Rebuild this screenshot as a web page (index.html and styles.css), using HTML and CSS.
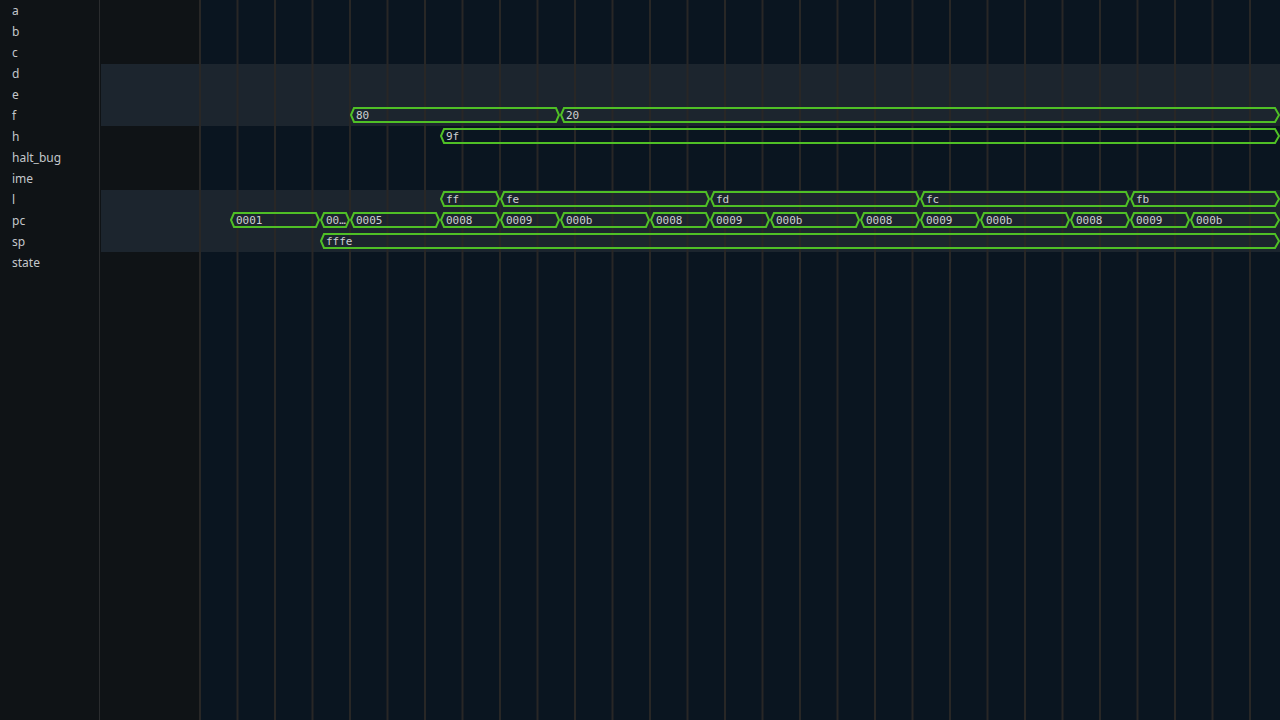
FILE: index.html
```
<!DOCTYPE html>
<html>
<head>
<meta charset="utf-8">
<link rel="stylesheet" href="styles.css">
</head>
<body>
<div class="app">
  <div class="sidebar">
    <div class="label">a</div>
    <div class="label">b</div>
    <div class="label">c</div>
    <div class="label">d</div>
    <div class="label">e</div>
    <div class="label">f</div>
    <div class="label">h</div>
    <div class="label">halt_bug</div>
    <div class="label">ime</div>
    <div class="label">l</div>
    <div class="label">pc</div>
    <div class="label">sp</div>
    <div class="label">state</div>
  </div>
  <div class="main">
    <svg class="wave" width="1180" height="720" viewBox="0 0 1180 720">
      <rect x="0" y="0" width="100" height="720" class="pre"/>
      <rect x="100" y="0" width="1080" height="720" class="bg"/>
      <rect x="1" y="64" width="1179" height="62" class="band"/>
      <rect x="1" y="190" width="1179" height="62" class="band"/>
      <g class="grid">
        <line x1="100" y1="0" x2="100" y2="720"/>
        <line x1="137.5" y1="0" x2="137.5" y2="720"/>
        <line x1="175" y1="0" x2="175" y2="720"/>
        <line x1="212.5" y1="0" x2="212.5" y2="720"/>
        <line x1="250" y1="0" x2="250" y2="720"/>
        <line x1="287.5" y1="0" x2="287.5" y2="720"/>
        <line x1="325" y1="0" x2="325" y2="720"/>
        <line x1="362.5" y1="0" x2="362.5" y2="720"/>
        <line x1="400" y1="0" x2="400" y2="720"/>
        <line x1="437.5" y1="0" x2="437.5" y2="720"/>
        <line x1="475" y1="0" x2="475" y2="720"/>
        <line x1="512.5" y1="0" x2="512.5" y2="720"/>
        <line x1="550" y1="0" x2="550" y2="720"/>
        <line x1="587.5" y1="0" x2="587.5" y2="720"/>
        <line x1="625" y1="0" x2="625" y2="720"/>
        <line x1="662.5" y1="0" x2="662.5" y2="720"/>
        <line x1="700" y1="0" x2="700" y2="720"/>
        <line x1="737.5" y1="0" x2="737.5" y2="720"/>
        <line x1="775" y1="0" x2="775" y2="720"/>
        <line x1="812.5" y1="0" x2="812.5" y2="720"/>
        <line x1="850" y1="0" x2="850" y2="720"/>
        <line x1="887.5" y1="0" x2="887.5" y2="720"/>
        <line x1="925" y1="0" x2="925" y2="720"/>
        <line x1="962.5" y1="0" x2="962.5" y2="720"/>
        <line x1="1000" y1="0" x2="1000" y2="720"/>
        <line x1="1037.5" y1="0" x2="1037.5" y2="720"/>
        <line x1="1075" y1="0" x2="1075" y2="720"/>
        <line x1="1112.5" y1="0" x2="1112.5" y2="720"/>
        <line x1="1150" y1="0" x2="1150" y2="720"/>
      </g>
      <g class="seg">
        <polygon points="251,115 254,108 456,108 459,115 456,122 254,122"/>
        <polygon points="461,115 464,108 1175,108 1179,115 1175,122 464,122"/>
        <polygon points="341,136 344,129 1175,129 1179,136 1175,143 344,143"/>
        <polygon points="341,199 344,192 396,192 399,199 396,206 344,206"/>
        <polygon points="401,199 404,192 606,192 609,199 606,206 404,206"/>
        <polygon points="611,199 614,192 816,192 819,199 816,206 614,206"/>
        <polygon points="821,199 824,192 1026,192 1029,199 1026,206 824,206"/>
        <polygon points="1031,199 1034,192 1175,192 1179,199 1175,206 1034,206"/>
        <polygon points="131,220 134,213 216,213 219,220 216,227 134,227"/>
        <polygon points="221,220 224,213 246,213 249,220 246,227 224,227"/>
        <polygon points="251,220 254,213 336,213 339,220 336,227 254,227"/>
        <polygon points="341,220 344,213 396,213 399,220 396,227 344,227"/>
        <polygon points="401,220 404,213 456,213 459,220 456,227 404,227"/>
        <polygon points="461,220 464,213 546,213 549,220 546,227 464,227"/>
        <polygon points="551,220 554,213 606,213 609,220 606,227 554,227"/>
        <polygon points="611,220 614,213 666,213 669,220 666,227 614,227"/>
        <polygon points="671,220 674,213 756,213 759,220 756,227 674,227"/>
        <polygon points="761,220 764,213 816,213 819,220 816,227 764,227"/>
        <polygon points="821,220 824,213 876,213 879,220 876,227 824,227"/>
        <polygon points="881,220 884,213 966,213 969,220 966,227 884,227"/>
        <polygon points="971,220 974,213 1026,213 1029,220 1026,227 974,227"/>
        <polygon points="1031,220 1034,213 1086,213 1089,220 1086,227 1034,227"/>
        <polygon points="1091,220 1094,213 1175,213 1179,220 1175,227 1094,227"/>
        <polygon points="221,241 224,234 1175,234 1179,241 1175,248 224,248"/>
      </g>
      <g class="val">
        <text x="256" y="119">80</text>
        <text x="466" y="119">20</text>
        <text x="346" y="140">9f</text>
        <text x="346" y="203">ff</text>
        <text x="406" y="203">fe</text>
        <text x="616" y="203">fd</text>
        <text x="826" y="203">fc</text>
        <text x="1036" y="203">fb</text>
        <text x="136" y="224">0001</text>
        <text x="226" y="224">00…</text>
        <text x="256" y="224">0005</text>
        <text x="346" y="224">0008</text>
        <text x="406" y="224">0009</text>
        <text x="466" y="224">000b</text>
        <text x="556" y="224">0008</text>
        <text x="616" y="224">0009</text>
        <text x="676" y="224">000b</text>
        <text x="766" y="224">0008</text>
        <text x="826" y="224">0009</text>
        <text x="886" y="224">000b</text>
        <text x="976" y="224">0008</text>
        <text x="1036" y="224">0009</text>
        <text x="1096" y="224">000b</text>
        <text x="226" y="245">fffe</text>
      </g>
    </svg>
  </div>
</div>
</body>
</html>
```
FILE: styles.css
```
html, body {
  margin: 0;
  padding: 0;
  background: #0a1520;
  overflow: hidden;
}
.app {
  display: flex;
  width: 1280px;
  height: 720px;
}
.sidebar {
  width: 99px;
  height: 720px;
  border-right: 1px solid #2a2c2e;
  background: #0f1316;
  display: flex;
  flex-direction: column;
}
.label {
  height: 21px;
  line-height: 21px;
  padding-left: 12px;
  font-family: "Noto Sans", "DejaVu Sans", sans-serif;
  font-size: 12px;
  color: #c3c7cb;
  white-space: nowrap;
}
.main {
  flex: 1;
  height: 720px;
}
.wave {
  display: block;
}
.pre {
  fill: #0f1316;
}
.bg {
  fill: #0a1520;
}
.band {
  fill: #1c252e;
}
.grid line {
  stroke: #282726;
  stroke-width: 2;
}
.seg polygon {
  fill: none;
  stroke: #4fbf26;
  stroke-width: 2;
  stroke-linejoin: miter;
}
.val text {
  font-family: "DejaVu Sans Mono", "Liberation Mono", monospace;
  font-size: 11px;
  fill: #cdd0d2;
}
```
